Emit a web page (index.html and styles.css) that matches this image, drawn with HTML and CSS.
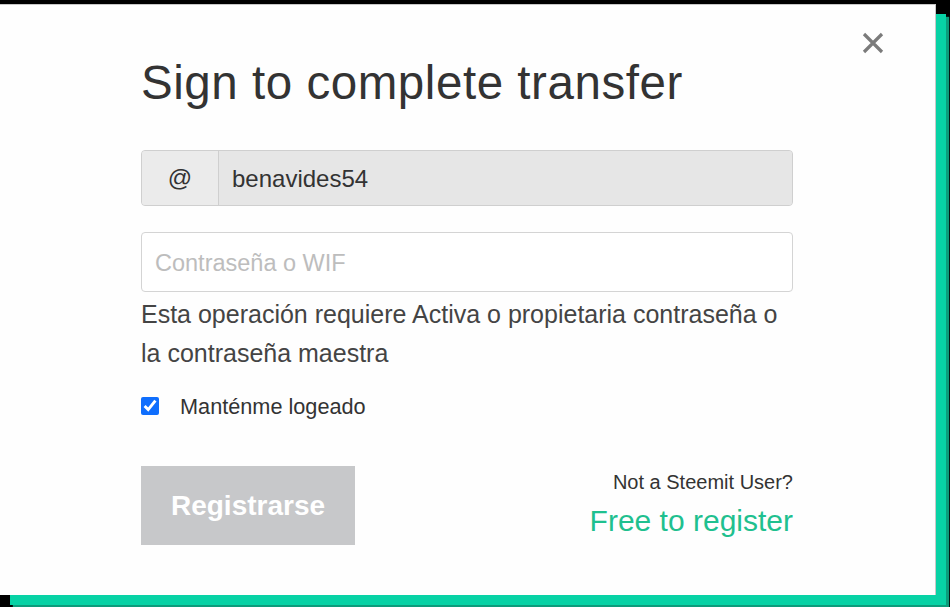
FILE: index.html
```html
<!DOCTYPE html>
<html lang="es">
<head>
<meta charset="utf-8">
<title>Sign to complete transfer</title>
<link rel="stylesheet" href="styles.css">
</head>
<body>
<div class="modal">
  <button class="close" aria-label="Close">
    <svg width="22" height="22" viewBox="0 0 22 22"><path d="M2 2 L20 20 M20 2 L2 20" stroke="#7b7b7b" stroke-width="3.2" stroke-linecap="butt"/></svg>
  </button>
  <div class="content">
    <h1 class="title">Sign to complete transfer</h1>
    <div class="input-group">
      <span class="addon">@</span>
      <input class="user" type="text" value="benavides54" disabled>
    </div>
    <input class="password" type="password" placeholder="Contraseña o WIF">
    <p class="help">Esta operación requiere Activa o propietaria contraseña o la contraseña maestra</p>
    <label class="remember"><input type="checkbox" checked><span>Manténme logeado</span></label>
    <div class="actions">
      <button class="submit" disabled>Registrarse</button>
      <div class="register">
        <div class="not-user">Not a Steemit User?</div>
        <a class="free" href="#">Free to register</a>
      </div>
    </div>
  </div>
</div>
</body>
</html>
```
FILE: styles.css
```css
* { box-sizing: border-box; }
html, body { margin: 0; padding: 0; }
body {
  background: #000;
  width: 950px;
  height: 607px;
  padding-top: 4px;
  font-family: "Liberation Sans", Arial, sans-serif;
  overflow: hidden;
}
.modal {
  position: relative;
  width: 936px;
  height: 591px;
  background: #fefefe;
  border-top: 1px solid #c8c8c8;
  border-right: 1px solid #c8c8c8;
  box-shadow: 10px 10px 0 #07d2a5, 13px 13px 1px #0c9c7b;
}
.close {
  position: absolute;
  left: 862px;
  top: 27px;
  width: 22px;
  height: 22px;
  padding: 0;
  border: 0;
  background: none;
  display: flex;
}
.content {
  display: flex;
  flex-direction: column;
  width: 793px;
  padding: 50px 0 0 141px;
}
.title {
  margin: 0;
  font-size: 47.5px;
  line-height: 56px;
  font-weight: 400;
  color: #333;
  letter-spacing: 0.55px;
}
.input-group {
  margin-top: 39px;
  display: flex;
  height: 56px;
  border: 1px solid #cfcfcf;
  border-radius: 4px;
  background: #e8e8e8;
  overflow: hidden;
}
.addon {
  width: 77px;
  flex: none;
  display: flex;
  align-items: center;
  justify-content: center;
  font-size: 24px;
  color: #333;
  border-right: 1px solid #cfcfcf;
  background: #ebebeb;
}
.user {
  flex: 1;
  border: 0;
  background: #e6e6e6;
  font: inherit;
  font-size: 24px;
  color: #333;
  padding: 2px 0 0 13px;
}
.password {
  margin-top: 26px;
  height: 60px;
  border: 1px solid #d4d4d4;
  border-radius: 4px;
  background: #fff;
  font: inherit;
  font-size: 23.5px;
  padding: 2px 0 0 13px;
  color: #333;
}
.password::placeholder { color: #bdbdbd; }
.help {
  margin: 3px 0 0;
  font-size: 25px;
  line-height: 39px;
  color: #444;
}
.remember {
  margin-top: 19px;
  display: flex;
  align-items: center;
  height: 30px;
  gap: 21px;
  font-size: 21.7px;
  color: #333;
}
.remember input {
  margin: -3px 0 0;
  width: 18px;
  height: 18px;
  accent-color: #0f6efd;
}
.actions {
  margin-top: 44px;
  display: flex;
  justify-content: space-between;
  align-items: flex-start;
}
.submit {
  width: 214px;
  height: 79px;
  border: 0;
  background: #c7c8ca;
  color: #fff;
  font: inherit;
  font-weight: 700;
  font-size: 28px;
  padding: 0;
}
.register {
  display: flex;
  flex-direction: column;
  align-items: flex-end;
}
.not-user {
  font-size: 20px;
  line-height: 32px;
  color: #333;
}
.free {
  font-size: 30px;
  line-height: 46px;
  color: #1fc08f;
  text-decoration: none;
}
```
